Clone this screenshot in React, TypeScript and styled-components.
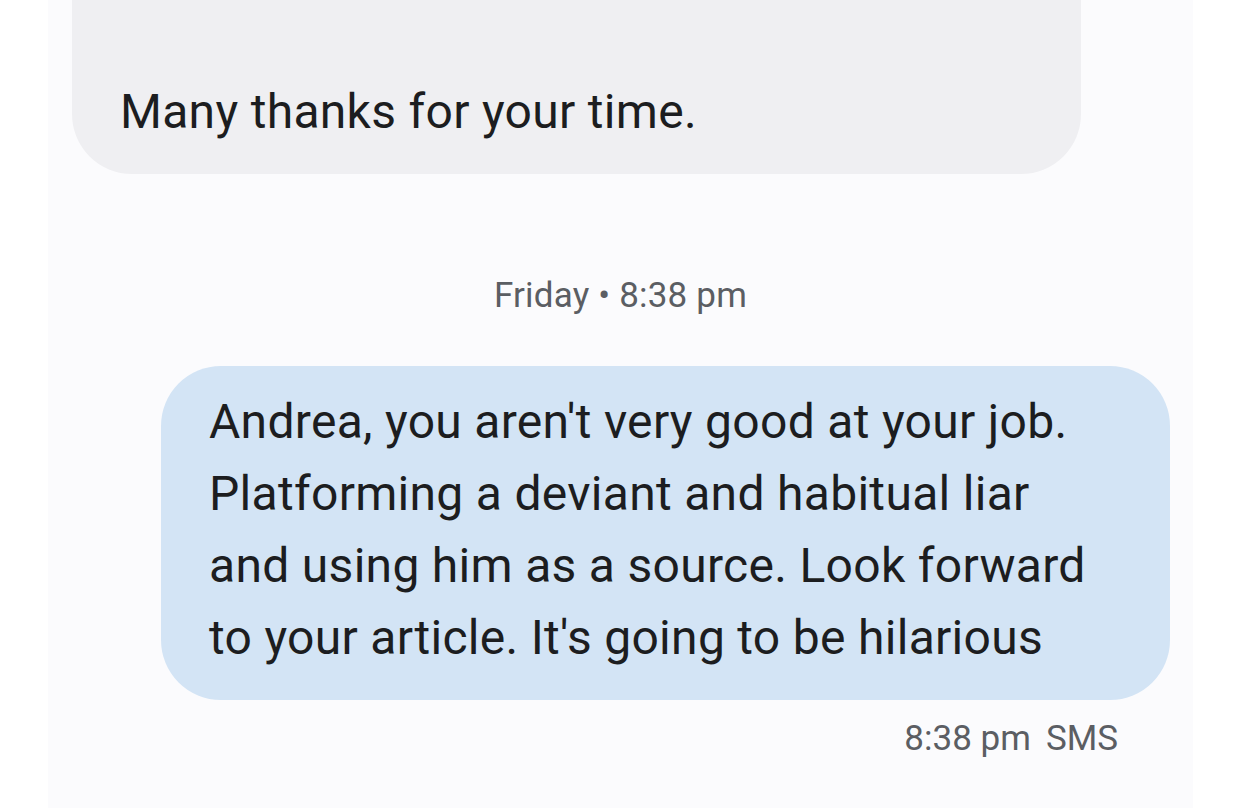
import styled, { createGlobalStyle } from 'styled-components';

const GlobalStyle = createGlobalStyle`
  html, body {
    margin: 0;
    padding: 0;
    background: #ffffff;
  }
  body {
    font-family: Roboto, "Noto Sans", sans-serif;
    -webkit-font-smoothing: antialiased;
  }
`;

const Page = styled.div`
  width: 1242px;
  height: 808px;
  display: flex;
  background: #ffffff;
  overflow: hidden;
`;

const Thread = styled.div`
  margin-left: 48px;
  width: 1145px;
  height: 808px;
  background: #fbfbfd;
  display: flex;
  flex-direction: column;
  justify-content: flex-end;
  overflow: hidden;
`;

const Bubble = styled.div<{ $outgoing?: boolean }>`
  width: 1009px;
  box-sizing: border-box;
  align-self: ${({ $outgoing }) => ($outgoing ? 'flex-end' : 'flex-start')};
  margin: ${({ $outgoing }) => ($outgoing ? '0 23px 0 0' : '0 0 0 24px')};
  padding: ${({ $outgoing }) => ($outgoing ? '20px 40px 26px 48px' : '160px 40px 26px 48px')};
  border-radius: 60px;
  background: ${({ $outgoing }) => ($outgoing ? '#d3e4f5' : '#efeff2')};
  color: #1c1d20;
  font-size: 48px;
  line-height: 72px;
  letter-spacing: 0.3px;
`;

const Line = styled.div`
  white-space: nowrap;
`;

const DayStamp = styled.div`
  text-align: center;
  color: #5b5e63;
  font-size: 35px;
  line-height: 40px;
  letter-spacing: 0.2px;
  margin: 102px 0 50px;
`;

const Meta = styled.div`
  display: flex;
  justify-content: flex-end;
  gap: 15px;
  color: #5b5e63;
  font-size: 35px;
  line-height: 40px;
  margin: 19px 75px 0 0;
`;

const Composer = styled.div`
  margin: 49px 0 0 93px;
  height: 2px;
  background: #f1f1f4;
`;

export default function App() {
  return (
    <Page>
      <GlobalStyle />
      <Thread>
        <Bubble>
          <Line>Many thanks for your time.</Line>
        </Bubble>
        <DayStamp>Friday • 8:38 pm</DayStamp>
        <Bubble $outgoing>
          <Line>Andrea, you aren't very good at your job.</Line>
          <Line>Platforming a deviant and habitual liar</Line>
          <Line>and using him as a source. Look forward</Line>
          <Line>to your article. It's going to be hilarious</Line>
        </Bubble>
        <Meta>
          <span>8:38 pm</span>
          <span>SMS</span>
        </Meta>
        <Composer />
      </Thread>
    </Page>
  );
}
